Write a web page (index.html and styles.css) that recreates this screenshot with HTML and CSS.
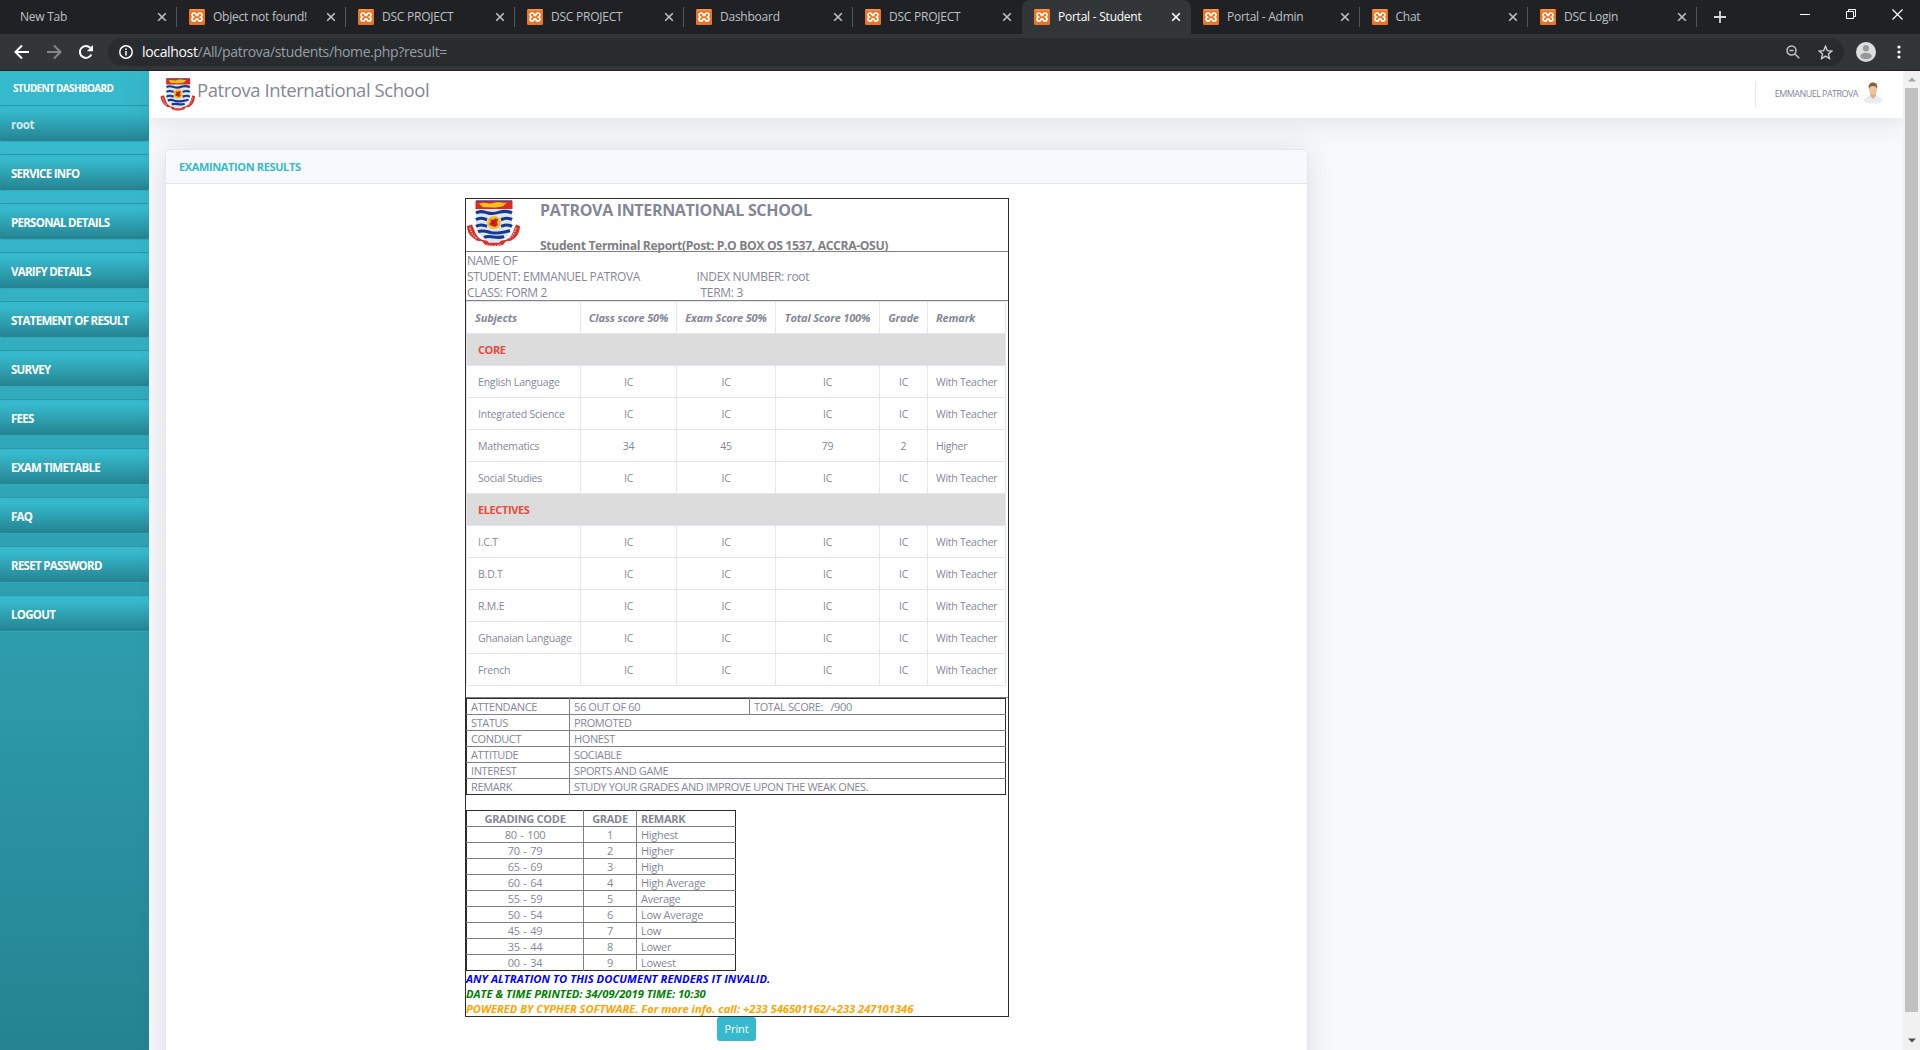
FILE: index.html
```html
<!DOCTYPE html>
<html lang="en">
<head>
<meta charset="utf-8">
<title>Portal - Student</title>
<link rel="stylesheet" href="styles.css">
</head>
<body>
<svg class="defs" width="0" height="0" aria-hidden="true">
  <symbol id="xampp" viewBox="0 0 16 16">
    <rect width="16" height="16" rx="1.2" fill="#f0731f"/>
    <path d="M1 .9h14" stroke="#f9b98c" stroke-width=".8"/>
    <path d="M7 6.300C7 4.600 6.300 4 5.200 4 3.700 4 3 5 3 6s.6 1.700 1.700 2C3.600 8.300 3 9.100 3 10.100s.7 2 2.200 2c1.100 0 1.800-.6 1.800-2.300M9 6.300C9 4.600 9.700 4 10.800 4 12.300 4 13 5 13 6s-.6 1.700-1.700 2c1.100.3 1.700 1.100 1.700 2.100s-.7 2-2.200 2c-1.100 0-1.800-.6-1.800-2.300M6.800 6.300h2.400M6.800 9.800h2.400" fill="none" stroke="#fff" stroke-width="1.700" stroke-linejoin="round"/>
  </symbol>
  <symbol id="close" viewBox="0 0 10 10"><path d="M1.200 1.200l7.600 7.600M8.800 1.200L1.200 8.800" stroke="currentColor" stroke-width="1.600"/></symbol>
  <symbol id="crest" viewBox="0 0 54 50" preserveAspectRatio="none">
    <path d="M10 1h36v24c0 11-9 17-18 21-9-4-18-10-18-21z" fill="#e1e4ec"/>
    <path d="M9.500 1h37v8.500h-37z" fill="#dc2a22"/>
    <path d="M10 1h36" stroke="#6a3a86" stroke-width="1.400"/>
    <path d="M13 4c4-3 9 1 14-1 5-2 10 1 14-.5l-4 4c-7 2-14 1-20 1z" fill="#f6c21c"/>
    <g fill="none" stroke="#123a93" stroke-width="3.200">
      <path d="M10 13.500c5-3 8-1 12 0 5 1.500 9 0 12-1 4-1 8-1 12 1"/>
      <path d="M10 20.500c5-3 8-1 11 0M46 20.500c-5-3-8-1-11 0"/>
      <path d="M10 27.500c5-3 8-1 11 0M46 27.500c-5-3-8-1-11 0"/>
      <path d="M12 33c5-2 9 0 13 1 5 1.500 10 0 19-2"/>
      <path d="M18 39c6-3 13 2 20-1"/>
    </g>
    <circle cx="28" cy="23.500" r="6.800" fill="#f4bd1e"/>
    <path d="M24 20l3 1 2-2 3 1-1 3 1 3-3 2-3-1-3-2 2-2z" fill="#d32a1d"/>
    <path d="M24.500 26l7-6M26 20l3 7" stroke="#8d1b16" stroke-width=".8"/>
    <path d="M1 27l5-1.500 2 5c1 4 3 7 5 9l3 2 5 1 2 2h10l2-2 5-1 3-2c2-2 4-5 5-9l2-5 4 1.500c0 4-1.500 8.500-4 11.500l-5 4-5 .5-3 3.500c-5 2-13 2-18 0l-3-3.500-5-.5-5-4c-3.500-3-5-7.500-5-11.500z" fill="#d3332b"/>
    <path d="M4 29c1 5 3 8 7 11M50 29c-1 5-3 8-7 11M20 46.500c5 1.500 10 1.500 15 0" fill="none" stroke="#f2b3ac" stroke-width="1.500" stroke-dasharray="1.600 1.200"/>
  </symbol>
</svg>

<div class="tabstrip">
  <div class="tab first"><span class="label">New Tab</span><svg class="x"><use href="#close"/></svg></div>
  <div class="tab"><svg class="fav"><use href="#xampp"/></svg><span class="label">Object not found!</span><svg class="x"><use href="#close"/></svg></div>
  <div class="tab"><svg class="fav"><use href="#xampp"/></svg><span class="label">DSC PROJECT</span><svg class="x"><use href="#close"/></svg></div>
  <div class="tab"><svg class="fav"><use href="#xampp"/></svg><span class="label">DSC PROJECT</span><svg class="x"><use href="#close"/></svg></div>
  <div class="tab"><svg class="fav"><use href="#xampp"/></svg><span class="label">Dashboard</span><svg class="x"><use href="#close"/></svg></div>
  <div class="tab"><svg class="fav"><use href="#xampp"/></svg><span class="label">DSC PROJECT</span><svg class="x"><use href="#close"/></svg></div>
  <div class="tab active"><svg class="fav"><use href="#xampp"/></svg><span class="label">Portal - Student</span><svg class="x"><use href="#close"/></svg></div>
  <div class="tab"><svg class="fav"><use href="#xampp"/></svg><span class="label">Portal - Admin</span><svg class="x"><use href="#close"/></svg></div>
  <div class="tab"><svg class="fav"><use href="#xampp"/></svg><span class="label">Chat</span><svg class="x"><use href="#close"/></svg></div>
  <div class="tab"><svg class="fav"><use href="#xampp"/></svg><span class="label">DSC Login</span><svg class="x"><use href="#close"/></svg></div>
  <div class="newtab"><svg width="12" height="12" viewBox="0 0 12 12"><path d="M6 0v12M0 6h12" stroke="#d5d7da" stroke-width="1.800"/></svg></div>
  <div class="winctl">
    <svg width="10" height="10" viewBox="0 0 10 10"><path d="M0 5.500h10" stroke="#fff"/></svg>
    <svg width="10" height="10" viewBox="0 0 10 10"><path d="M.5 2.500h7v7h-7zM2.500 2.500v-2h7v7h-2" fill="none" stroke="#fff"/></svg>
    <svg width="11" height="11" viewBox="0 0 11 11"><path d="M.5.500l10 10M10.500.500l-10 10" stroke="#fff" stroke-width="1.200"/></svg>
  </div>
</div>

<div class="toolbar">
  <div class="navbtns">
    <svg width="16" height="16" viewBox="0 0 16 16"><path d="M15 8H2M8 1.500L1.500 8 8 14.500" fill="none" stroke="#fff" stroke-width="2"/></svg>
    <svg width="16" height="16" viewBox="0 0 16 16"><path d="M1 8h13M8 1.500L14.500 8 8 14.500" fill="none" stroke="#85888b" stroke-width="2"/></svg>
    <svg width="16" height="16" viewBox="0 0 16 16"><path d="M13.300 10.500A6 6 0 1 1 12.300 3.800" fill="none" stroke="#fff" stroke-width="2"/><path d="M15 1v6.200H8.800z" fill="#fff"/></svg>
  </div>
  <div class="omnibox">
    <svg width="14" height="14" viewBox="0 0 14 14"><circle cx="7" cy="7" r="6.200" fill="none" stroke="#fff" stroke-width="1.500"/><path d="M7 6v4.500M7 3.400v1.500" stroke="#fff" stroke-width="1.500"/></svg>
    <span class="url"><b>localhost</b>/All/patrova/students/home.php?result=</span>
    <svg width="14" height="14" viewBox="0 0 14 14"><circle cx="5.500" cy="5.500" r="4.500" fill="none" stroke="#c3c5c8" stroke-width="1.500"/><path d="M9 9l4.300 4.300M3.400 5.500h4.200" stroke="#c3c5c8" stroke-width="1.500"/></svg>
    <svg width="15" height="15" viewBox="0 0 15 15"><path d="M7.500 1.300l1.800 4.300 4.600.4-3.500 3 1.100 4.600-4-2.500-4 2.500L4.600 9 1.100 6l4.600-.4z" fill="none" stroke="#d4d6d9" stroke-width="1.300"/></svg>
  </div>
  <svg class="profile" width="20" height="20" viewBox="0 0 20 20"><circle cx="10" cy="10" r="10" fill="#dfe1e1"/><circle cx="10" cy="6.200" r="3.100" fill="#989b9d"/><ellipse cx="10" cy="14" rx="5.800" ry="3.200" fill="#989b9d"/></svg>
  <svg width="4" height="14" viewBox="0 0 4 14"><circle cx="2" cy="2" r="1.600" fill="#fff"/><circle cx="2" cy="7" r="1.600" fill="#fff"/><circle cx="2" cy="12" r="1.600" fill="#fff"/></svg>
</div>

<div class="page">
  <nav class="sidebar">
    <div class="brand">STUDENT DASHBOARD</div>
    <a class="item user">root</a>
    <a class="item">SERVICE INFO</a>
    <a class="item">PERSONAL DETAILS</a>
    <a class="item">VARIFY DETAILS</a>
    <a class="item">STATEMENT OF RESULT</a>
    <a class="item">SURVEY</a>
    <a class="item">FEES</a>
    <a class="item">EXAM TIMETABLE</a>
    <a class="item">FAQ</a>
    <a class="item">RESET PASSWORD</a>
    <a class="item">LOGOUT</a>
  </nav>

  <div class="content">
    <header class="topbar">
      <svg class="logo" width="35" height="34"><use href="#crest" width="35" height="34"/></svg>
      <h1>Patrova International School</h1>
      <div class="account">
        <span>EMMANUEL PATROVA</span>
        <svg width="20" height="22" viewBox="0 0 20 22"><path d="M1 19c0-3 3-4.500 6-5.200h6c3 .7 6 2.200 6 5.200 0 1.600-4 2.600-9 2.600S1 20.600 1 19z" fill="#e9ebf4"/><path d="M7.200 11h5.600v3L10 17l-2.800-3z" fill="#dfae84"/><ellipse cx="10" cy="7.500" rx="3.900" ry="5.500" fill="#edc39b"/><path d="M5.800 7C5.200 2.500 7 .5 10 .5s4.800 2 4.200 6.500c-.8-2-1.600-3-4.200-3s-3.400 1-4.200 3z" fill="#8b5e38"/></svg>
      </div>
    </header>

    <section class="card">
      <h2>EXAMINATION RESULTS</h2>
      <div class="report">
        <div class="head">
          <svg width="54" height="48"><use href="#crest" width="54" height="48"/></svg>
          <div class="titles">
            <strong class="school">PATROVA INTERNATIONAL SCHOOL</strong>
            <strong class="sub">Student Terminal Report(Post: P.O BOX OS 1537, ACCRA-OSU)</strong>
          </div>
        </div>
        <div class="info">
          <div><span>NAME OF<br>STUDENT: EMMANUEL PATROVA</span><span>CLASS: FORM 2</span></div>
          <div class="right"><span>INDEX NUMBER: root</span><span class="term">TERM: 3</span></div>
        </div>

        <table class="scores">
          <colgroup><col class="s1"><col class="s2"><col class="s3"><col class="s4"><col class="s5"><col class="s6"></colgroup>
          <tr><th>Subjects</th><th>Class score 50%</th><th>Exam Score 50%</th><th>Total Score 100%</th><th>Grade</th><th>Remark</th></tr>
          <tr class="group"><td colspan="6">CORE</td></tr>
          <tr><td>English Language</td><td>IC</td><td>IC</td><td>IC</td><td>IC</td><td>With Teacher</td></tr>
          <tr><td>Integrated Science</td><td>IC</td><td>IC</td><td>IC</td><td>IC</td><td>With Teacher</td></tr>
          <tr><td>Mathematics</td><td>34</td><td>45</td><td>79</td><td>2</td><td>Higher</td></tr>
          <tr><td>Social Studies</td><td>IC</td><td>IC</td><td>IC</td><td>IC</td><td>With Teacher</td></tr>
          <tr class="group"><td colspan="6">ELECTIVES</td></tr>
          <tr><td>I.C.T</td><td>IC</td><td>IC</td><td>IC</td><td>IC</td><td>With Teacher</td></tr>
          <tr><td>B.D.T</td><td>IC</td><td>IC</td><td>IC</td><td>IC</td><td>With Teacher</td></tr>
          <tr><td>R.M.E</td><td>IC</td><td>IC</td><td>IC</td><td>IC</td><td>With Teacher</td></tr>
          <tr><td>Ghanaian Language</td><td>IC</td><td>IC</td><td>IC</td><td>IC</td><td>With Teacher</td></tr>
          <tr><td>French</td><td>IC</td><td>IC</td><td>IC</td><td>IC</td><td>With Teacher</td></tr>
        </table>

        <div class="summary">
          <table class="lined conduct">
            <colgroup><col class="c1"><col class="c2"><col class="c3"></colgroup>
            <tr><td>ATTENDANCE</td><td>56 OUT OF 60</td><td>TOTAL SCORE: &nbsp; /900</td></tr>
            <tr><td>STATUS</td><td colspan="2">PROMOTED</td></tr>
            <tr><td>CONDUCT</td><td colspan="2">HONEST</td></tr>
            <tr><td>ATTITUDE</td><td colspan="2">SOCIABLE</td></tr>
            <tr><td>INTEREST</td><td colspan="2">SPORTS AND GAME</td></tr>
            <tr><td>REMARK</td><td colspan="2">STUDY YOUR GRADES AND IMPROVE UPON THE WEAK ONES.</td></tr>
          </table>
          <table class="lined grading">
            <colgroup><col class="g1"><col class="g2"><col class="g3"></colgroup>
            <tr><th>GRADING CODE</th><th>GRADE</th><th>REMARK</th></tr>
            <tr><td>80 - 100</td><td>1</td><td>Highest</td></tr>
            <tr><td>70 - 79</td><td>2</td><td>Higher</td></tr>
            <tr><td>65 - 69</td><td>3</td><td>High</td></tr>
            <tr><td>60 - 64</td><td>4</td><td>High Average</td></tr>
            <tr><td>55 - 59</td><td>5</td><td>Average</td></tr>
            <tr><td>50 - 54</td><td>6</td><td>Low Average</td></tr>
            <tr><td>45 - 49</td><td>7</td><td>Low</td></tr>
            <tr><td>35 - 44</td><td>8</td><td>Lower</td></tr>
            <tr><td>00 - 34</td><td>9</td><td>Lowest</td></tr>
          </table>
        </div>
        <div class="notes">
          <p class="warn">ANY ALTRATION TO THIS DOCUMENT RENDERS IT INVALID.</p>
          <p class="date">DATE &amp; TIME PRINTED: 34/09/2019 TIME: 10:30</p>
          <p class="power">POWERED BY CYPHER SOFTWARE. For more info. call: +233 546501162/+233 247101346</p>
        </div>
      </div>
      <button class="print">Print</button>
    </section>
  </div>

  <div class="scrollbar">
    <svg width="8" height="5" viewBox="0 0 8 5"><path d="M0 4.500L4 .5l4 4z" fill="#a3a3a3"/></svg>
    <div class="thumb"></div>
    <svg width="8" height="5" viewBox="0 0 8 5"><path d="M0 .5l4 4 4-4z" fill="#505050"/></svg>
  </div>
</div>
</body>
</html>
```
FILE: styles.css
```css
* { box-sizing: border-box; }
body {
  margin: 0; height: 1050px; overflow: hidden;
  display: flex; flex-direction: column;
  font-family: "Open Sans", "Noto Sans", sans-serif;
  font-size: 11px; color: #858796; background: #f8f9fc;
}
.defs { position: absolute; }
svg { flex: none; display: block; }

/* Browser chrome */
.tabstrip { display: flex; height: 34px; background: #202124; padding-left: 8px; flex: none; }
.tab {
  display: flex; align-items: center; width: 169px; height: 34px; padding: 0 10px 0 12px;
  color: #bdc1c6; font-size: 12px; line-height: 16px; letter-spacing: -.24px;
}
.tab:not(.active) { background: linear-gradient(#55585b, #55585b) right 7px / 1px 20px no-repeat; }
.tab:nth-child(6) { background: none; }
.tab:nth-child(n+8) { width: 168.500px; }
.tab .label { flex: 1; white-space: nowrap; margin: -1px 0 0 8px; }
.tab.first .label { margin-left: 0; }
.fav { width: 16px; height: 16px; }
.x { width: 10px; height: 10px; }
.tab.active {
  background: #323639; color: #fff; border-radius: 8px 8px 0 0;
}
.newtab { padding: 11px 0 0 17px; flex: 1; }
.winctl { display: flex; gap: 36px; padding: 9px 17px 0 0; }
.toolbar {
  display: flex; align-items: center; height: 37px; flex: none; background: #323639;
  border-bottom: 1px solid #252022; padding: 0 19px 0 14px;
}
.navbtns { display: flex; gap: 16px; width: 94px; }
.omnibox {
  display: flex; align-items: center; width: 1736px; height: 28px; border-radius: 14px;
  background: #282c2f; padding: 0 11px 0 11px; gap: 18px;
}
.url { flex: 1; margin: -1px 0 0 -9px; font-size: 14px; letter-spacing: -.34px; color: #9aa0a6; }
.url b { font-weight: 400; color: #fff; }
.profile { margin: 0 21px 0 12px; }

/* Page frame */
.page { display: flex; height: 979px; }
.sidebar { width: 149px; flex: none; background: linear-gradient(180deg, #36b9cc 10%, #258391 100%); }
.brand {
  height: 34px; padding-left: 13px; line-height: 35px; color: #fff;
  font-size: 10px; font-weight: 700; letter-spacing: -.66px; white-space: nowrap;
}
.item {
  display: block; height: 37px; margin-bottom: 12px; padding-left: 11px; line-height: 38px;
  color: #fff; font-size: 11.500px; font-weight: 700; letter-spacing: -.71px; white-space: nowrap;
  border-top: 1px solid #2b96a5; border-bottom: 1px solid #32aabb; border-radius: 2px;
  background: linear-gradient(180deg, #36b9cc 15%, #258391 100%);
}
.item.user { color: rgba(255, 255, 255, .8); letter-spacing: -.3px; }
.content { flex: 1; }
.topbar {
  display: flex; height: 47px; padding: 0 20px 0 11px; background: #fff;
  box-shadow: 0 2px 28px rgba(58, 59, 69, .15);
}
.logo { margin-top: 7px; }
.topbar h1 { flex: 1; margin: 0 0 0 2px; font-size: 18.500px; font-weight: 400; line-height: 37px; letter-spacing: -.44px; }
.account {
  display: flex; gap: 5px; height: 25px; margin-top: 11px; padding-left: 19px;
  border-left: 1px solid #e3e6f0; font-size: 9px; letter-spacing: -.54px; line-height: 23px;
}
.scrollbar {
  display: flex; flex-direction: column; align-items: center;
  width: 17px; flex: none; background: #f1f1f1; padding: 6px 0 7px;
}
.thumb { width: 13px; height: 925px; margin: 6px 0 26px; background: #c1c1c1; }

/* Results card */
.card {
  width: 1143px; height: 931px; margin: 31px 0 0 16px; background: #fff;
  border: 1px solid #e3e6f0; border-radius: 5px;
  box-shadow: 0 2px 28px rgba(58, 59, 69, .15);
}
.card h2 {
  margin: 0; height: 34px; padding-left: 13px; background: #f8f9fc; border-bottom: 1px solid #e3e6f0;
  border-radius: 4px 4px 0 0;
  color: #36b9cc; font-size: 11px; font-weight: 700; line-height: 33px; letter-spacing: -.37px;
}
.report { width: 544px; height: 819px; margin: 14px 0 0 299px; border: 1px solid #2c2c2c; }
.head { display: flex; height: 53px; border-bottom: 1px solid gray; }
.head > svg { margin: 1px 0 0 0; }
.titles { display: flex; flex-direction: column; margin-left: 20px; white-space: nowrap; }
.school { height: 34px; font-size: 16px; line-height: 22px; letter-spacing: -.32px; }
.sub { font-size: 12.200px; line-height: 17px; padding-top: 2px; letter-spacing: -.37px; color: #7f7f85; margin-top: 5px; }
.school { flex: none; height: 29px; }
.sub { margin-top: 7px; }
.info { display: flex; height: 49px; padding: 1px 0 0 1px; border-bottom: 1px solid gray; font-size: 12px; line-height: 16px; letter-spacing: -.35px; }
.info > div { display: flex; flex-direction: column; width: 229.500px; }
.info .right { padding-top: 16px; letter-spacing: -.3px; }
.info .term { padding-left: 4px; }

table { border-collapse: collapse; table-layout: fixed; }
.scores { width: 539px; font-size: 10.500px; letter-spacing: -.2px; }
.scores tr { height: 32px; }
.scores td, .scores th { border: 1px solid #e3e6f0; padding: 0; text-align: center; white-space: nowrap; line-height: 20px; }
.scores th { font-style: italic; font-size: 11px; letter-spacing: -.17px; }
.scores th:first-child { text-align: left; padding-left: 8px; }
.scores td:first-child { text-align: left; padding-left: 11px; }
.scores td:last-child:not(:first-child), .scores th:last-child { text-align: left; padding-left: 8px; }
.scores td:last-child:not(:first-child) { letter-spacing: -.26px; }
.scores .group td { background: #dcdcdc; color: #e74a3b; font-weight: 700; font-size: 11px; letter-spacing: -.4px; }
.s1 { width: 114px; } .s2 { width: 96px; } .s3 { width: 99px; }
.s4 { width: 104px; } .s5 { width: 48px; } .s6 { width: 78px; }

.summary { margin-top: 11px; border-top: 1px solid gray; }
.lined { border: 1px solid #2c2c2c; font-size: 11px; letter-spacing: -.38px; }
.lined tr { height: 16px; }
.lined td, .lined th { padding: 0 0 0 4px; line-height: 15px; white-space: nowrap; text-align: left; }
.lined td + td, .lined th + th { border-left: 1px solid gray; }
.lined tr + tr td { border-top: 1px solid gray; }
.conduct { width: 539px; }
.c1 { width: 103px; } .c2 { width: 180px; } .c3 { width: 256px; }
.grading { width: 269px; margin-top: 15px; letter-spacing: -.28px; }
.g1 { width: 117px; } .g2 { width: 53px; } .g3 { width: 99px; }
.grading td:nth-child(-n+2), .grading th:nth-child(-n+2) { text-align: center; padding: 0; }
.grading td:first-child { word-spacing: 1px; }

.notes { font-size: 11.200px; font-weight: 700; font-style: italic; }
.notes p { margin: 0; line-height: 15px; white-space: nowrap; letter-spacing: -.03px; }
.notes .warn { color: #00f; letter-spacing: .05px; }
.date { color: green; }
.power { color: orange; }
.print {
  display: block; width: 39px; height: 24px; margin: 0 0 0 551px; padding: 0 0 2px;
  border: 0; border-radius: 3px; background: #36b9cc; color: #fff;
  font-family: inherit; font-size: 11px; letter-spacing: -.1px;
}
```
